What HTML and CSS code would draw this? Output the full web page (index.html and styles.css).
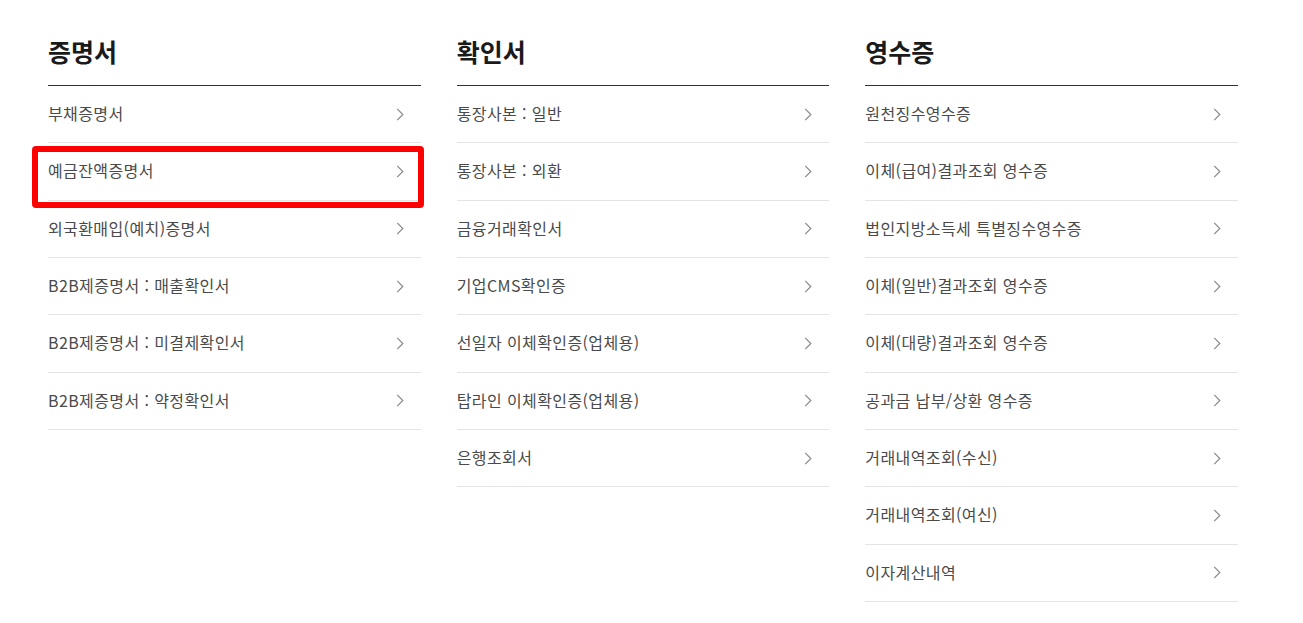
FILE: index.html
```html
<!DOCTYPE html>
<html lang="ko">
<head>
<meta charset="utf-8">
<title>증명서 발급</title>
<link rel="stylesheet" href="styles.css">
</head>
<body>
<div class="page">
  <section class="col">
    <h2 class="col-title">증명서</h2>
    <ul class="list">
      <li class="item"><span>부채증명서</span><svg class="chev" viewBox="0 0 8 14"><path d="M1 1l6 6-6 6"/></svg></li>
      <li class="item item-marked"><span>예금잔액증명서</span><svg class="chev" viewBox="0 0 8 14"><path d="M1 1l6 6-6 6"/></svg><i class="mark"></i></li>
      <li class="item"><span>외국환매입(예치)증명서</span><svg class="chev" viewBox="0 0 8 14"><path d="M1 1l6 6-6 6"/></svg></li>
      <li class="item"><span>B2B제증명서 : 매출확인서</span><svg class="chev" viewBox="0 0 8 14"><path d="M1 1l6 6-6 6"/></svg></li>
      <li class="item"><span>B2B제증명서 : 미결제확인서</span><svg class="chev" viewBox="0 0 8 14"><path d="M1 1l6 6-6 6"/></svg></li>
      <li class="item"><span>B2B제증명서 : 약정확인서</span><svg class="chev" viewBox="0 0 8 14"><path d="M1 1l6 6-6 6"/></svg></li>
    </ul>
  </section>
  <section class="col">
    <h2 class="col-title">확인서</h2>
    <ul class="list">
      <li class="item"><span>통장사본 : 일반</span><svg class="chev" viewBox="0 0 8 14"><path d="M1 1l6 6-6 6"/></svg></li>
      <li class="item"><span>통장사본 : 외환</span><svg class="chev" viewBox="0 0 8 14"><path d="M1 1l6 6-6 6"/></svg></li>
      <li class="item"><span>금융거래확인서</span><svg class="chev" viewBox="0 0 8 14"><path d="M1 1l6 6-6 6"/></svg></li>
      <li class="item"><span>기업CMS확인증</span><svg class="chev" viewBox="0 0 8 14"><path d="M1 1l6 6-6 6"/></svg></li>
      <li class="item"><span>선일자 이체확인증(업체용)</span><svg class="chev" viewBox="0 0 8 14"><path d="M1 1l6 6-6 6"/></svg></li>
      <li class="item"><span>탑라인 이체확인증(업체용)</span><svg class="chev" viewBox="0 0 8 14"><path d="M1 1l6 6-6 6"/></svg></li>
      <li class="item"><span>은행조회서</span><svg class="chev" viewBox="0 0 8 14"><path d="M1 1l6 6-6 6"/></svg></li>
    </ul>
  </section>
  <section class="col">
    <h2 class="col-title">영수증</h2>
    <ul class="list">
      <li class="item"><span>원천징수영수증</span><svg class="chev" viewBox="0 0 8 14"><path d="M1 1l6 6-6 6"/></svg></li>
      <li class="item"><span>이체(급여)결과조회 영수증</span><svg class="chev" viewBox="0 0 8 14"><path d="M1 1l6 6-6 6"/></svg></li>
      <li class="item"><span>법인지방소득세 특별징수영수증</span><svg class="chev" viewBox="0 0 8 14"><path d="M1 1l6 6-6 6"/></svg></li>
      <li class="item"><span>이체(일반)결과조회 영수증</span><svg class="chev" viewBox="0 0 8 14"><path d="M1 1l6 6-6 6"/></svg></li>
      <li class="item"><span>이체(대량)결과조회 영수증</span><svg class="chev" viewBox="0 0 8 14"><path d="M1 1l6 6-6 6"/></svg></li>
      <li class="item"><span>공과금 납부/상환 영수증</span><svg class="chev" viewBox="0 0 8 14"><path d="M1 1l6 6-6 6"/></svg></li>
      <li class="item"><span>거래내역조회(수신)</span><svg class="chev" viewBox="0 0 8 14"><path d="M1 1l6 6-6 6"/></svg></li>
      <li class="item"><span>거래내역조회(여신)</span><svg class="chev" viewBox="0 0 8 14"><path d="M1 1l6 6-6 6"/></svg></li>
      <li class="item"><span>이자계산내역</span><svg class="chev" viewBox="0 0 8 14"><path d="M1 1l6 6-6 6"/></svg></li>
    </ul>
  </section>
</div>
</body>
</html>
```

FILE: styles.css
```css
html, body {
  margin: 0;
  padding: 0;
  background: #fff;
}
body {
  font-family: "Noto Sans CJK KR", "Noto Sans", "Liberation Sans", sans-serif;
  color: #444;
}
.page {
  display: grid;
  grid-template-columns: repeat(3, 1fr);
  column-gap: 36px;
  width: 1190px;
  margin-left: 48px;
  padding-top: 33px;
  align-items: start;
}
.col-title {
  margin: 0;
  font-size: 25px;
  font-weight: 700;
  line-height: 36px;
  color: #1a1a1a;
  padding-bottom: 16px;
  border-bottom: 1px solid #333;
  letter-spacing: 0;
}
.list {
  list-style: none;
  margin: 0;
  padding: 0;
}
.item {
  position: relative;
  display: flex;
  align-items: center;
  justify-content: space-between;
  height: 56.33px;
  border-bottom: 1px solid #e4e4e4;
  font-size: 16px;
  font-weight: 400;
  letter-spacing: 0.4px;
  color: #4a4a4a;
}
.item span {
  margin-top: -2px;
}
.chev {
  width: 8px;
  height: 13px;
  margin-right: 17px;
  fill: none;
  stroke: #8a8a8a;
  stroke-width: 1.3;
}
.mark {
  position: absolute;
  left: -16px;
  right: -3px;
  top: 3px;
  bottom: -8px;
  border: 6px solid #ff0000;
  border-radius: 4px;
  pointer-events: none;
}
```
